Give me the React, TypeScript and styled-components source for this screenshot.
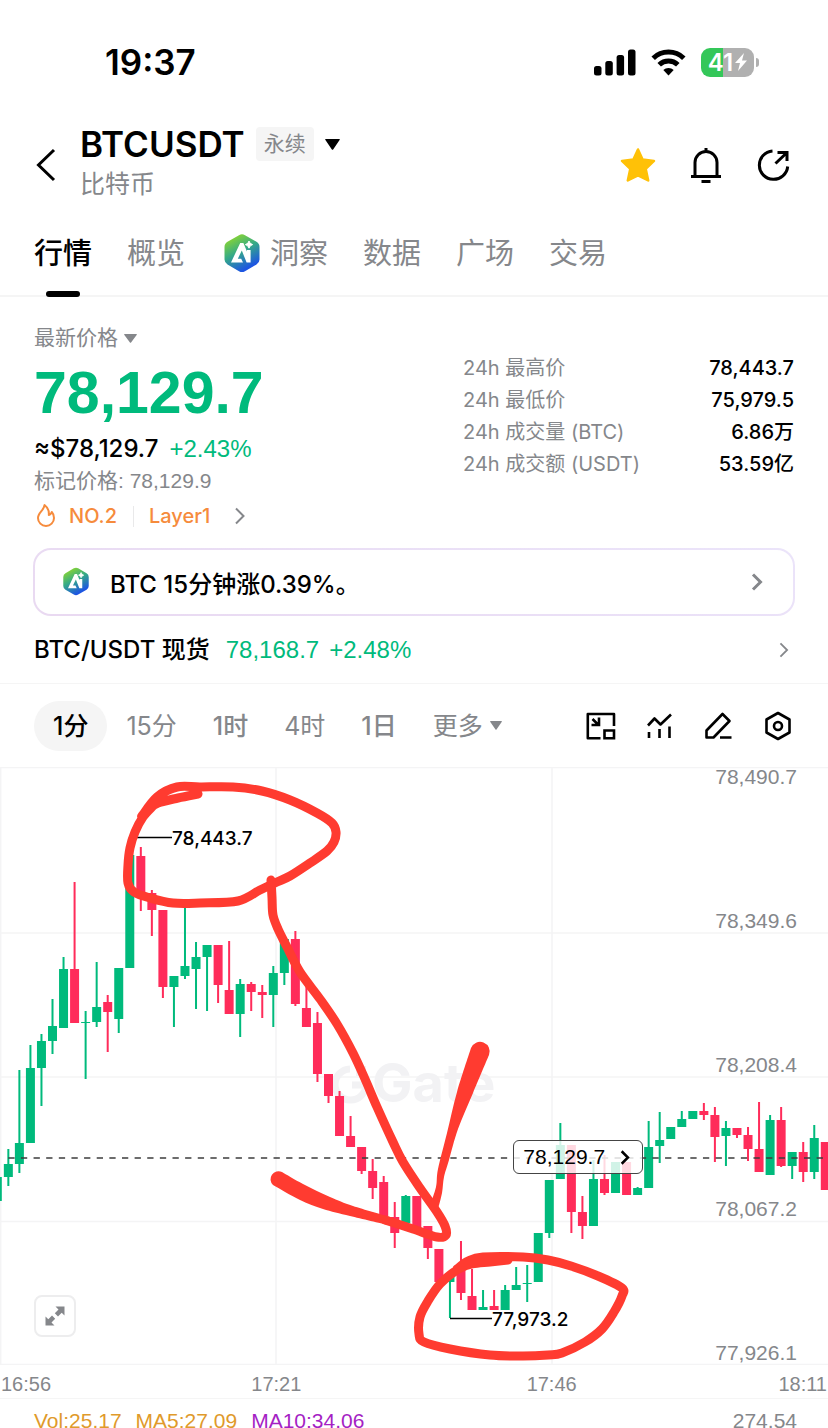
import React from "react";
import styled, { createGlobalStyle, css } from "styled-components";

const GREEN = "#00ba7c";
const RED = "#ff2c5a";
const INK = "#ff3b30";
const GREY = "#85878b";
const UI = '"Inter", "Noto Sans CJK SC", sans-serif';
const NUM = '"Liberation Sans", "Noto Sans CJK SC", sans-serif';

const Global = createGlobalStyle`
  * { box-sizing: border-box; }
  body { margin: 0; background: #fff; }
  button, a { font: inherit; color: inherit; text-decoration: none; background: none; border: 0; padding: 0; cursor: pointer; }
  svg { display: block; flex: none; }
`;

const Page = styled.div`
  height: 100vh;
  overflow: hidden;
  background: #fff;
  color: #000;
  font-family: ${UI};
`;

/* ---------- status bar ---------- */
const StatusBar = styled.div`
  height: 124px;
  padding: 0 69px 0 105px;
  display: flex;
  align-items: center;
  justify-content: space-between;
`;
const Clock = styled.time`
  font-size: 35px;
  font-weight: 600;
  line-height: 40px;
`;
const StatusIcons = styled.div`
  display: flex;
  align-items: center;
  gap: 15px;
`;
const Battery = styled.div`
  display: flex;
  align-items: center;
  gap: 2px;
`;
const BatteryBody = styled.div`
  width: 53px;
  height: 29px;
  border-radius: 9px;
  background: linear-gradient(90deg, #34c759 42%, #b0b0b0 42%);
  color: #fff;
  display: flex;
  align-items: center;
  justify-content: center;
  gap: 2px;
  font-size: 24px;
  font-weight: 600;
  line-height: 29px;
`;
const BatteryCap = styled.div`
  width: 3px;
  height: 9px;
  border-radius: 0 3px 3px 0;
  background: #b0b0b0;
`;

/* ---------- header ---------- */
const Header = styled.header`
  height: 82px;
  padding: 0 36px;
  display: flex;
  align-items: center;
`;
const BackButton = styled.button`
  width: 44px;
  height: 44px;
  display: flex;
  align-items: center;
`;
const Titles = styled.div`
  flex: 1;
  padding-bottom: 2px;
`;
const TitleRow = styled.div`
  display: flex;
  align-items: center;
  gap: 11px;
`;
const Title = styled.h1`
  margin: 0;
  font-size: 35px;
  font-weight: 600;
  line-height: 40px;
`;
const Tag = styled.span`
  height: 34px;
  padding: 0 8px;
  border-radius: 4px;
  background: #f5f5f5;
  color: ${GREY};
  font-size: 21px;
  line-height: 34px;
`;
const Subtitle = styled.div`
  color: ${GREY};
  font-size: 25px;
  line-height: 40px;
`;
const HeaderActions = styled.div`
  display: flex;
  gap: 32px;
`;
const IconButton = styled.button`
  width: 36px;
  height: 36px;
  display: grid;
  place-items: center;
`;

/* ---------- tabs ---------- */
const Tabs = styled.nav`
  height: 91px;
  padding: 4px 34px 0;
  border-bottom: 2px solid #f5f5f5;
  display: flex;
  gap: 35px;
`;
const Tab = styled.a<{ $active?: boolean }>`
  height: 87px;
  display: flex;
  align-items: center;
  gap: 6px;
  color: ${(p) => (p.$active ? "#000" : GREY)};
  font-size: 29px;
  font-weight: ${(p) => (p.$active ? 500 : 400)};
  line-height: 88px;
  position: relative;
  ${(p) =>
    p.$active &&
    css`
      &::after {
        content: "";
        position: absolute;
        bottom: 0;
        left: 50%;
        width: 34px;
        height: 6px;
        margin-left: -17px;
        border-radius: 3px;
        background: #000;
      }
    `}
`;

/* ---------- summary ---------- */
const Summary = styled.section`
  padding: 25px 34px 0;
  display: flex;
  justify-content: space-between;
`;
const Quote = styled.div`
  font-family: ${NUM};
`;
const PriceKind = styled.button`
  display: flex;
  align-items: center;
  gap: 6px;
  color: ${GREY};
  font-size: 21px;
  line-height: 32px;
`;
const BigPrice = styled.div`
  color: ${GREEN};
  font-size: 59px;
  font-weight: 700;
  line-height: 78px;
`;
const FiatRow = styled.div`
  display: flex;
  align-items: baseline;
  gap: 11px;
  font-size: 24px;
  line-height: 34px;
`;
const Fiat = styled.span`
  font-family: ${UI};
  font-weight: 500;
`;
const Up = styled.span`
  color: ${GREEN};
`;
const MarkPrice = styled.div`
  color: ${GREY};
  font-size: 21px;
  line-height: 30px;
`;
const Badges = styled.a`
  display: flex;
  align-items: center;
  gap: 12px;
  color: #f68b3c;
  font-family: ${UI};
  font-size: 20px;
  font-weight: 500;
  line-height: 40px;
`;
const LayerName = styled.span`
  padding-right: 12px;
`;
const Divider = styled.span`
  width: 1px;
  height: 21px;
  margin: 0 3px 0 4px;
  background: #e9e9ea;
`;
const Stats = styled.dl`
  width: 331px;
  margin: 30px 0 0;
`;
const Stat = styled.div`
  display: flex;
  justify-content: space-between;
  font-size: 20px;
  line-height: 32px;
`;
const StatName = styled.dt`
  color: ${GREY};
`;
const StatValue = styled.dd`
  margin: 0;
  font-weight: 500;
`;

/* ---------- insight and spot links ---------- */
const Insight = styled.a`
  height: 68px;
  margin: 12px 33px 0;
  padding: 0 30px 0 25px;
  border: 2px solid transparent;
  border-radius: 18px;
  background:
    linear-gradient(#fff, #fff) padding-box,
    linear-gradient(200deg, #ebe4fa, #e9d9f1) border-box;
  display: flex;
  align-items: center;
  gap: 18px;
`;
const InsightText = styled.span`
  flex: 1;
  font-size: 24px;
  font-weight: 500;
`;
const SpotRow = styled.a`
  height: 68px;
  padding: 0 38px 0 34px;
  display: flex;
  align-items: center;
  border-bottom: 1px solid #f5f5f5;
`;
const SpotText = styled.span`
  flex: 1;
  display: flex;
  align-items: baseline;
  gap: 10px;
  font-size: 24px;
  line-height: 32px;
`;
const SpotName = styled.span`
  padding-right: 6px;
  font-weight: 500;
`;
const SpotPrice = styled.span`
  color: ${GREEN};
  font-family: ${NUM};
`;

/* ---------- interval toolbar ---------- */
const Toolbar = styled.div`
  height: 83px;
  padding: 0 32px 0 34px;
  display: flex;
  align-items: center;
  justify-content: space-between;
`;
const Intervals = styled.div`
  display: flex;
  align-items: center;
  gap: 36px;
  color: ${GREY};
`;
const Interval = styled.button<{ $active?: boolean; $strong?: boolean }>`
  display: flex;
  align-items: center;
  gap: 7px;
  font-size: 25px;
  line-height: 50px;
  font-weight: ${(p) => (p.$active || p.$strong ? 500 : 400)};
  ${(p) =>
    p.$active &&
    css`
      padding: 0 19px;
      margin-right: -17px;
      border-radius: 25px;
      background: #f5f5f5;
      color: #000;
    `}
`;
const Tools = styled.div`
  display: flex;
  gap: 23px;
`;

/* ---------- chart ---------- */
const ChartBox = styled.section`
  position: relative;
`;
const ChartSvg = styled.svg`
  width: 100%;
  height: auto;
`;
const ScaleText = styled.text`
  fill: ${GREY};
  font-family: ${NUM};
  font-size: 21px;
`;
const MarkText = styled.text`
  fill: #000;
  font-family: ${UI};
  font-size: 19px;
  font-weight: 500;
`;
const Watermark = styled.text`
  fill: #f2f2f4;
  font-family: ${UI};
  font-size: 54px;
  font-weight: 700;
`;
const LastPrice = styled.button`
  position: absolute;
  left: 62%;
  top: 373px;
  width: 130px;
  height: 34px;
  padding: 0 11px 0 9px;
  border: 1px solid #444;
  border-radius: 6px;
  background: rgba(255, 255, 255, 0.82);
  display: flex;
  align-items: center;
  justify-content: space-between;
  font-family: ${NUM};
  font-size: 21px;
`;
const ExpandButton = styled.button`
  position: absolute;
  left: 34px;
  bottom: 28px;
  width: 42px;
  height: 42px;
  border: 2px solid #ededee;
  border-radius: 8px;
  background: #fff;
  display: grid;
  place-items: center;
`;
const TimeAxis = styled.div`
  height: 34px;
  padding: 0 1px;
  border-bottom: 1px solid #f5f5f5;
  display: grid;
  grid-template-columns: 1fr 2fr 2fr 1fr;
  text-align: center;
  color: ${GREY};
  font-family: ${NUM};
  font-size: 20px;
  line-height: 38px;
`;
const FirstTime = styled.span`
  text-align: left;
`;
const LastTime = styled.span`
  text-align: right;
`;
const VolumeRow = styled.div`
  padding: 0 31px 0 34px;
  display: flex;
  gap: 14px;
  font-family: ${NUM};
  font-size: 21px;
  line-height: 44px;
`;
const Legend = styled.span<{ $color: string }>`
  color: ${(p) => p.$color};
`;
const VolumeMax = styled.span`
  margin-left: auto;
  color: ${GREY};
`;

/* ---------- icons ---------- */
const Caret = ({ w, h, color }: { w: number; h: number; color: string }) => (
  <svg width={w} height={h} viewBox="0 0 14 10" preserveAspectRatio="none" aria-hidden="true">
    <path d="M.6 0h12.8q.8.3.2 1L7.6 9.5q-.6.7-1.2 0L.4 1Q-.2.3.6 0Z" fill={color} />
  </svg>
);

const Chevron = ({ h, width, color }: { h: number; width: number; color: string }) => (
  <svg width={12} height={h} viewBox="0 0 12 18" aria-hidden="true">
    <path d="M2 1.5 9.5 9 2 16.5" fill="none" stroke={color} strokeWidth={width} />
  </svg>
);

const AiLogo = ({ size, id }: { size: number; id: string }) => (
  <svg width={size} height={size} viewBox="0 0 44 44" aria-hidden="true">
    <defs>
      <linearGradient id={id} x1="0.2" y1="0" x2="0.7" y2="1">
        <stop offset="0.1" stopColor="#7fd03c" />
        <stop offset="0.45" stopColor="#35ab86" />
        <stop offset="0.9" stopColor="#1d55e2" />
      </linearGradient>
    </defs>
    <path
      d="M19 3.200q3-1.700 6 0l11.500 6.600q3 1.700 3 5.200v12.500q0 3.200-3 5L25 39.200q-3 1.700-6 0L7.500 32.500q-3-1.800-3-5V15q0-3.500 3-5.200Z"
      fill={`url(#${id})`}
    />
    <path
      d="M20.200 11h3.200L27 19.500V18h3.600V30.500h-4L21.800 18.500 17.800 26.800h3.400l1.800 3.700H11Z"
      fill="#fff"
    />
    <path d="M29 9q.7 3 3.600 3.600-2.900.7-3.600 3.600-.7-2.900-3.600-3.600 2.900-.6 3.600-3.600Z" fill="#fff" stroke="#fff" />
  </svg>
);

const SignalIcon = () => (
  <svg width="42" height="27" viewBox="0 0 42 27" aria-hidden="true">
    <rect x="0" y="17" width="7.500" height="9.500" rx="2.500" />
    <rect x="11.300" y="12" width="7.500" height="14.500" rx="2.500" />
    <rect x="22.600" y="6" width="7.500" height="20.500" rx="2.500" />
    <rect x="34" y="0.500" width="7.500" height="26" rx="2.500" />
  </svg>
);

const WifiIcon = () => (
  <svg width="35" height="27" viewBox="0 0 35 27" aria-hidden="true">
    <g fill="none" stroke="#000" strokeWidth="5">
      <path d="M2.200 9.300a22 22 0 0 1 30.600 0" />
      <path d="M8.200 15.700a13.400 13.400 0 0 1 18.600 0" />
    </g>
    <path d="M17.500 26.500 12.300 21a7.600 7.600 0 0 1 10.400 0Z" />
  </svg>
);

const BoltIcon = () => (
  <svg width="12" height="18" viewBox="0 0 12 18" aria-hidden="true">
    <path d="M9 0 0 10h5L3 18l9-10.500H7Z" fill="#fff" />
  </svg>
);

const BackIcon = () => (
  <svg width="20" height="34" viewBox="0 0 20 34" aria-hidden="true">
    <path d="M18 2 2.500 17 18 32" fill="none" stroke="#000" strokeWidth="3" />
  </svg>
);

const StarIcon = () => (
  <svg width="36" height="36" viewBox="0 0 36 36" aria-hidden="true">
    <path
      d="M18 2.500 22.600 12.500 34 13.900 25.700 21.800 28.200 33.500 18 28.400 7.800 33.500 10.300 21.800 2 13.900 13.400 12.500Z"
      fill="#ffc107"
      stroke="#ffc107"
      strokeWidth="2.500"
      strokeLinejoin="round"
    />
  </svg>
);

const BellIcon = () => (
  <svg width="36" height="36" viewBox="0 0 36 36" fill="none" stroke="#000" strokeWidth="3" aria-hidden="true">
    <path d="M3 29.500h30M7 29.500V15.500a11 11 0 0 1 22 0v14M18 1v4M13.500 34.500h9" />
  </svg>
);

const ShareIcon = () => (
  <svg width="36" height="36" viewBox="0 0 36 36" fill="none" stroke="#000" strokeWidth="3" aria-hidden="true">
    <path d="M16.500 4A14.200 14.200 0 1 0 31.700 19.500" />
    <path d="M19.500 16.500 30.500 6M21.500 5.500h9.500V14" />
  </svg>
);

const FlameIcon = () => (
  <svg width="23" height="26" viewBox="0 0 23 26" fill="none" stroke="#f68b3c" strokeWidth="2" strokeLinejoin="round" aria-hidden="true">
    <path d="M10.500 2C10.500 7 4 9.500 4 15a8 8 0 0 0 16 0c0-2.500-.8-4.500-2.200-6-.5 1.500-1.500 2.500-3 3C15.200 8 13.800 4.500 10.500 2Z" />
  </svg>
);

const LayoutIcon = () => (
  <svg width="36" height="36" viewBox="0 0 36 36" fill="none" stroke="#000" strokeWidth="2.600" aria-hidden="true">
    <path d="M17.500 30.200H4.800V6H31V18" strokeLinejoin="round" />
    <path d="M21.500 22.500h9.500v7.700h-9.500Z" />
    <path d="M9.500 11 15 16.500M16 9.500v7.500H8.500" />
  </svg>
);

const IndicatorIcon = () => (
  <svg width="36" height="36" viewBox="0 0 36 36" fill="none" stroke="#000" strokeWidth="2.600" aria-hidden="true">
    <path d="M6 17.500 12.500 10.500 18.500 16.500 29 6.500" strokeLinejoin="round" />
    <path d="M7 24v6M17.500 21v9M27.500 18.500v11.500" />
  </svg>
);

const PencilIcon = () => (
  <svg width="36" height="36" viewBox="0 0 36 36" fill="none" stroke="#000" strokeWidth="2.600" strokeLinejoin="round" aria-hidden="true">
    <path d="M5.500 29.500V22.500L21.500 6 28.500 13 12.500 29.500ZM19 29.500H30.500" />
  </svg>
);

const SettingsIcon = () => (
  <svg width="36" height="36" viewBox="0 0 36 36" fill="none" stroke="#000" strokeWidth="2.600" strokeLinejoin="round" aria-hidden="true">
    <path d="M18 5 29.500 11.500V24.500L18 31 6.500 24.500V11.500Z" />
    <circle cx="18" cy="18" r="4" />
  </svg>
);

const ExpandIcon = () => (
  <svg width="22" height="22" viewBox="0 0 22 22" fill={GREY} aria-hidden="true">
    <path d="M11.500 1.500H20.500V10.500L17.700 7.700 14 11.400 10.800 8.200 14.500 4.500Z" />
    <path d="M10.500 20.500H1.500V11.500L4.300 14.300 8 10.600 11.200 13.800 7.500 17.500Z" />
  </svg>
);

/* ---------- chart data ---------- */
// [direction, body top, body bottom, high, low], in chart units from the top edge
type Candle = ["g" | "r", number, number, number, number];
const CANDLES: Candle[] = [
  ["g", 410, 434, 410, 434], ["g", 397, 410, 382, 419], ["g", 376, 397, 303, 406], ["g", 301, 376, 278, 376],
  ["g", 274, 301, 267, 339], ["g", 259, 274, 232, 287], ["g", 202, 261, 190, 261], ["r", 202, 256, 115, 256],
  ["g", 255, 256, 244, 312], ["g", 240, 255, 195, 260], ["r", 235, 245, 228, 285], ["g", 201, 252, 201, 266],
  ["g", 88, 201, 70, 201], ["r", 89, 130, 80, 144], ["r", 126, 143, 123, 169], ["r", 143, 220, 143, 231],
  ["g", 209, 220, 209, 260], ["g", 199, 209, 140, 212], ["g", 190, 202, 175, 242], ["g", 178, 190, 178, 244],
  ["r", 178, 218, 178, 236], ["r", 223, 247, 174, 247], ["g", 217, 247, 212, 270], ["r", 217, 225, 215, 244],
  ["r", 225, 228, 218, 251], ["g", 206, 228, 199, 260], ["g", 172, 206, 172, 218], ["r", 172, 237, 164, 239],
  ["r", 241, 260, 216, 260], ["r", 256, 307, 245, 315], ["r", 307, 329, 307, 336], ["r", 329, 369, 324, 369],
  ["r", 369, 380, 349, 380], ["r", 380, 404, 380, 407], ["r", 404, 421, 392, 432], ["r", 415, 449, 409, 449],
  ["r", 450, 466, 435, 481], ["g", 429, 456, 428, 464], ["r", 429, 460, 429, 460], ["r", 459, 481, 459, 492],
  ["r", 482, 515, 482, 515], ["g", 508, 515, 508, 551], ["r", 501, 526, 474, 533], ["r", 529, 543, 502, 543],
  ["g", 540, 543, 523, 543], ["r", 539, 543, 523, 543], ["g", 523, 543, 518, 543], ["g", 518, 523, 500, 523],
  ["g", 516, 517, 498, 535], ["g", 466, 515, 466, 515], ["g", 413, 466, 413, 471], ["g", 378, 412, 356, 412],
  ["r", 378, 445, 378, 466], ["r", 445, 459, 429, 472], ["g", 412, 459, 393, 459], ["r", 412, 426, 388, 428],
  ["g", 395, 426, 395, 426], ["r", 395, 428, 395, 428], ["g", 421, 428, 420, 428], ["g", 380, 421, 354, 421],
  ["g", 373, 379, 345, 396], ["g", 360, 372, 360, 372], ["g", 352, 360, 344, 360], ["g", 344, 352, 344, 352],
  ["r", 344, 348, 336, 353], ["r", 348, 370, 340, 395], ["g", 361, 369, 354, 399], ["r", 361, 368, 361, 371],
  ["r", 368, 382, 360, 394], ["r", 382, 405, 335, 405], ["g", 353, 408, 348, 408], ["r", 353, 399, 340, 400],
  ["g", 385, 399, 385, 412], ["r", 385, 405, 375, 415], ["g", 371, 405, 358, 412], ["r", 375, 423, 375, 423],
];
const STEP = 276 / 25;
const candleX = (i: number) => -2.7 + STEP * i;

const SCALE = [
  { label: "78,490.7", line: 0.5, text: 17 },
  { label: "78,349.6", line: 166, text: 161 },
  { label: "78,208.4", line: 310, text: 305 },
  { label: "78,067.2", line: 454.5, text: 449 },
  { label: "77,926.1", line: 597.5, text: 593 },
];

// Hand-drawn marks: points joined by a smooth curve
type Pt = [number, number];
const smooth = (pts: Pt[], start = "M") => {
  let d = `${start}${pts[0].join(" ")}`;
  for (let i = 0; i < pts.length - 1; i++) {
    const p0 = pts[i - 1] ?? pts[i];
    const p1 = pts[i];
    const p2 = pts[i + 1];
    const p3 = pts[i + 2] ?? p2;
    d += `C${p1[0] + (p2[0] - p0[0]) / 6} ${p1[1] + (p2[1] - p0[1]) / 6} ${p2[0] - (p3[0] - p1[0]) / 6} ${p2[1] - (p3[1] - p1[1]) / 6} ${p2[0]} ${p2[1]}`;
  }
  return d;
};
const TOP_LOOP: Pt[] = [
  [198, 27], [178, 31], [158, 36], [147, 43], [142, 49], [157, 30], [177, 20], [200, 20], [233, 20], [262, 24], [290, 33],
  [317, 46], [332, 56], [336, 65], [334, 75], [327, 84], [310, 96], [290, 109], [277, 115], [260, 123], [238, 134], [200, 136],
  [173, 136], [150, 131], [134, 125], [128, 116], [128, 98], [130, 81], [135, 65], [143, 50], [153, 39],
];
const DOWN_LINE: Pt[] = [
  [271, 113], [272, 131], [273, 148], [278, 162], [287, 180], [300, 205], [320, 232], [337, 257], [353, 286], [365, 312],
  [377, 340], [393, 375], [403, 395], [420, 421], [437, 445], [445, 459], [446, 468], [437, 470], [413, 462], [385, 453],
];
const BOTTOM_LOOP: Pt[] = [
  [508, 493], [490, 495], [472, 497], [457, 503], [440, 517], [428, 534], [420, 550], [419, 567], [424, 575], [450, 582],
  [490, 588], [523, 589], [548, 588], [562, 586], [585, 575], [602, 562], [614, 545], [622, 529], [622, 521], [598, 509],
  [571, 499], [548, 493], [523, 490], [483, 490], [468, 494], [457, 502],
];
// The two arms of the arrow head swell towards their free ends
const LEFT_ARM = `${smooth([[282, 405], [303, 417], [330, 430], [353, 439], [390, 450]])}${smooth(
  [[388, 458], [350, 449], [323, 442], [300, 433], [273, 418]],
  "L",
)}A8 8 0 0 1 282 405Z`;
const RIGHT_ARM = `${smooth([[471, 281], [457, 325], [447, 366], [438, 402], [436, 420], [430, 438]])}${smooth(
  [[438, 442], [442, 426], [444, 410], [449, 393], [458, 362], [473, 326], [489, 288]],
  "L",
)}A9.5 9.5 0 0 0 471 281Z`;

const INTERVALS = [
  { label: "1分", active: true },
  { label: "15分" },
  { label: "1时", strong: true },
  { label: "4时" },
  { label: "1日", strong: true },
];

const STATS = [
  ["24h 最高价", "78,443.7"],
  ["24h 最低价", "75,979.5"],
  ["24h 成交量 (BTC)", "6.86万"],
  ["24h 成交额 (USDT)", "53.59亿"],
];

const PriceChart = () => (
  <ChartSvg viewBox="0 0 828 598" role="img" aria-label="BTCUSDT 1分">
    <g stroke="#f4f4f5" strokeWidth="1.500">
      {SCALE.map((s) => (
        <path key={s.label} d={`M0 ${s.line}H828`} />
      ))}
      <path d="M.7 0V598M276 0V598M552 0V598" />
    </g>
    <path d="M350 302A15.500 15.500 0 1 0 366 318H352" fill="none" stroke="#f2f2f4" strokeWidth="7" />
    <path d="M356 299h10v10h-10Z" fill="#f2f2f4" />
    <Watermark x="372" y="335">Gate</Watermark>
    {SCALE.map((s) => (
      <ScaleText key={s.label} x="797" y={s.text} textAnchor="end">
        {s.label}
      </ScaleText>
    ))}
    {CANDLES.map(([dir, top, bottom, high, low], i) => (
      <g key={i} fill={dir === "g" ? GREEN : RED}>
        <rect x={candleX(i) - 4.5} y={top} width="9" height={bottom - top} />
        <rect x={candleX(i) - 1} y={high} width="2" height={low - high} />
      </g>
    ))}
    <path d="M8.300 391H828" stroke="#3c3c3c" strokeWidth="1.500" strokeDasharray="6.300 6.330" />
    <path d="M130 70.500H172M450 551.500H492" stroke="#000" strokeWidth="1.500" />
    <MarkText x="172" y="78">78,443.7</MarkText>
    <MarkText x="492" y="559">77,973.2</MarkText>
    <g fill="none" stroke={INK} strokeWidth="9" strokeLinecap="round" strokeLinejoin="round">
      <path d={smooth(TOP_LOOP)} />
      <path d={smooth(DOWN_LINE)} />
      <path d={smooth(BOTTOM_LOOP)} />
    </g>
    <g fill={INK}>
      <path d={LEFT_ARM} />
      <path d={RIGHT_ARM} />
    </g>
  </ChartSvg>
);

export default function App() {
  return (
    <Page>
      <Global />
      <StatusBar>
        <Clock>19:37</Clock>
        <StatusIcons>
          <SignalIcon />
          <WifiIcon />
          <Battery>
            <BatteryBody>
              41
              <BoltIcon />
            </BatteryBody>
            <BatteryCap />
          </Battery>
        </StatusIcons>
      </StatusBar>

      <Header>
        <BackButton aria-label="返回"><BackIcon /></BackButton>
        <Titles>
          <TitleRow>
            <Title>BTCUSDT</Title>
            <Tag>永续</Tag>
            <Caret w={15} h={11} color="#000" />
          </TitleRow>
          <Subtitle>比特币</Subtitle>
        </Titles>
        <HeaderActions>
          <IconButton aria-label="收藏"><StarIcon /></IconButton>
          <IconButton aria-label="提醒"><BellIcon /></IconButton>
          <IconButton aria-label="分享"><ShareIcon /></IconButton>
        </HeaderActions>
      </Header>

      <Tabs>
        <Tab href="#market" $active>行情</Tab>
        <Tab href="#overview">概览</Tab>
        <Tab href="#insight"><AiLogo size={44} id="ai-tab" />洞察</Tab>
        <Tab href="#data">数据</Tab>
        <Tab href="#square">广场</Tab>
        <Tab href="#trade">交易</Tab>
      </Tabs>

      <Summary>
        <Quote>
          <PriceKind>
            最新价格
            <Caret w={13} h={9} color={GREY} />
          </PriceKind>
          <BigPrice>78,129.7</BigPrice>
          <FiatRow>
            <Fiat>≈$78,129.7</Fiat>
            <Up>+2.43%</Up>
          </FiatRow>
          <MarkPrice>标记价格: 78,129.9</MarkPrice>
          <Badges href="#rank">
            <FlameIcon />
            <span>NO.2</span>
            <Divider />
            <LayerName>Layer1</LayerName>
            <Chevron h={18} width={2} color={GREY} />
          </Badges>
        </Quote>
        <Stats>
          {STATS.map(([name, value]) => (
            <Stat key={name}>
              <StatName>{name}</StatName>
              <StatValue>{value}</StatValue>
            </Stat>
          ))}
        </Stats>
      </Summary>

      <Insight href="#ai">
        <AiLogo size={32} id="ai-card" />
        <InsightText>BTC 15分钟涨0.39%。</InsightText>
        <Chevron h={18} width={3} color={GREY} />
      </Insight>

      <SpotRow href="#spot">
        <SpotText>
          <SpotName>BTC/USDT 现货</SpotName>
          <SpotPrice>78,168.7</SpotPrice>
          <SpotPrice>+2.48%</SpotPrice>
        </SpotText>
        <Chevron h={16} width={2} color={GREY} />
      </SpotRow>

      <Toolbar>
        <Intervals>
          {INTERVALS.map((it) => (
            <Interval key={it.label} $active={it.active} $strong={it.strong}>
              {it.label}
            </Interval>
          ))}
          <Interval>
            更多
            <Caret w={12} h={9} color={GREY} />
          </Interval>
        </Intervals>
        <Tools>
          <IconButton aria-label="画中画"><LayoutIcon /></IconButton>
          <IconButton aria-label="指标"><IndicatorIcon /></IconButton>
          <IconButton aria-label="画线"><PencilIcon /></IconButton>
          <IconButton aria-label="设置"><SettingsIcon /></IconButton>
        </Tools>
      </Toolbar>

      <ChartBox>
        <PriceChart />
        <LastPrice>
          78,129.7
          <Chevron h={15} width={3} color="#000" />
        </LastPrice>
        <ExpandButton aria-label="全屏"><ExpandIcon /></ExpandButton>
      </ChartBox>

      <TimeAxis>
        <FirstTime>16:56</FirstTime>
        <span>17:21</span>
        <span>17:46</span>
        <LastTime>18:11</LastTime>
      </TimeAxis>

      <VolumeRow>
        <Legend $color="#e09a2b">Vol:25.17</Legend>
        <Legend $color="#e09a2b">MA5:27.09</Legend>
        <Legend $color="#a51fc4">MA10:34.06</Legend>
        <VolumeMax>274.54</VolumeMax>
      </VolumeRow>
    </Page>
  );
}
